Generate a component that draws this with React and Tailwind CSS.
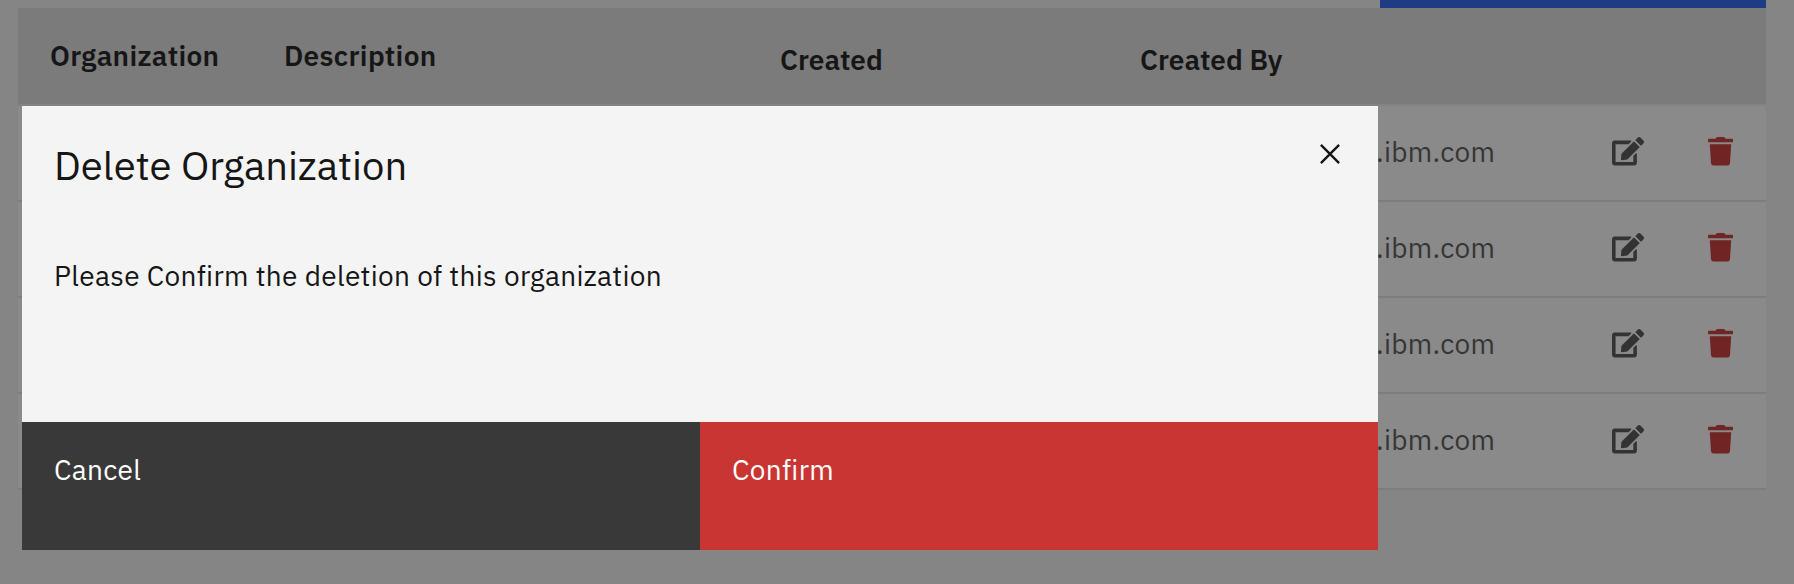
import { FaEdit, FaTrash } from "react-icons/fa";

const rows = [1, 2, 3, 4];

function Row() {
  return (
    <div className="flex h-24 items-start border-b-2 border-[#7d7d7d] bg-[#8a8a8a] text-[#363636]">
      <span className="ml-[1358px] w-[236px] pt-7">.ibm.com</span>
      <FaEdit className="mt-[31.4px] h-[28.5px] w-8 text-[#333333]" />
      <FaTrash className="mt-[31.4px] ml-16 h-[28.5px] w-[25px] text-[#702424]" />
    </div>
  );
}

function Modal() {
  return (
    <div
      role="dialog"
      aria-label="Delete Organization"
      className="absolute left-[22px] top-[106px] flex h-[444px] w-[1356px] flex-col bg-[#f4f4f4] text-[#161616]"
    >
      <div className="flex items-start justify-between pl-8 pr-[38px] pt-[31px]">
        <h2 className="text-[40px] leading-[56px] tracking-normal">Delete Organization</h2>
        <button aria-label="Close" className="mt-[7px]">
          <svg viewBox="0 0 20 20" className="block size-5" fill="none" stroke="currentColor" strokeWidth="2.4">
            <path d="M.9.9 19.1 19.1M19.1.9.9 19.1" />
          </svg>
        </button>
      </div>
      <p className="grow pl-8 pt-[65px]">Please Confirm the deletion of this organization</p>
      <div className="flex h-32 text-white">
        <button className="flex w-1/2 items-start bg-[#393939] pl-8 pt-[30px]">Cancel</button>
        <button className="flex w-1/2 items-start bg-[#c93532] pl-8 pt-[30px]">Confirm</button>
      </div>
    </div>
  );
}

export default function App() {
  return (
    <div className="relative h-[584px] w-[1794px] overflow-hidden bg-[#858585] pl-[18px] pr-[28px] font-['IBM_Plex_Sans',sans-serif] text-[28px] leading-9 tracking-[0.32px]">
      <div className="ml-auto h-2 w-[386px] bg-[#1d3c84]" />
      <div className="flex h-24 items-start bg-[#7b7b7b] pl-8 font-semibold text-[#161616]">
        <span className="w-[234px] pt-[30px]">Organization</span>
        <span className="w-[496px] pt-[30px]">Description</span>
        <span className="w-[360px] pt-[34px] tracking-normal">Created</span>
        <span className="pt-[34px] tracking-normal">Created By</span>
      </div>
      <div className="h-0.5 bg-[#838383]" />
      {rows.map((id) => (
        <Row key={id} />
      ))}
      <Modal />
    </div>
  );
}
